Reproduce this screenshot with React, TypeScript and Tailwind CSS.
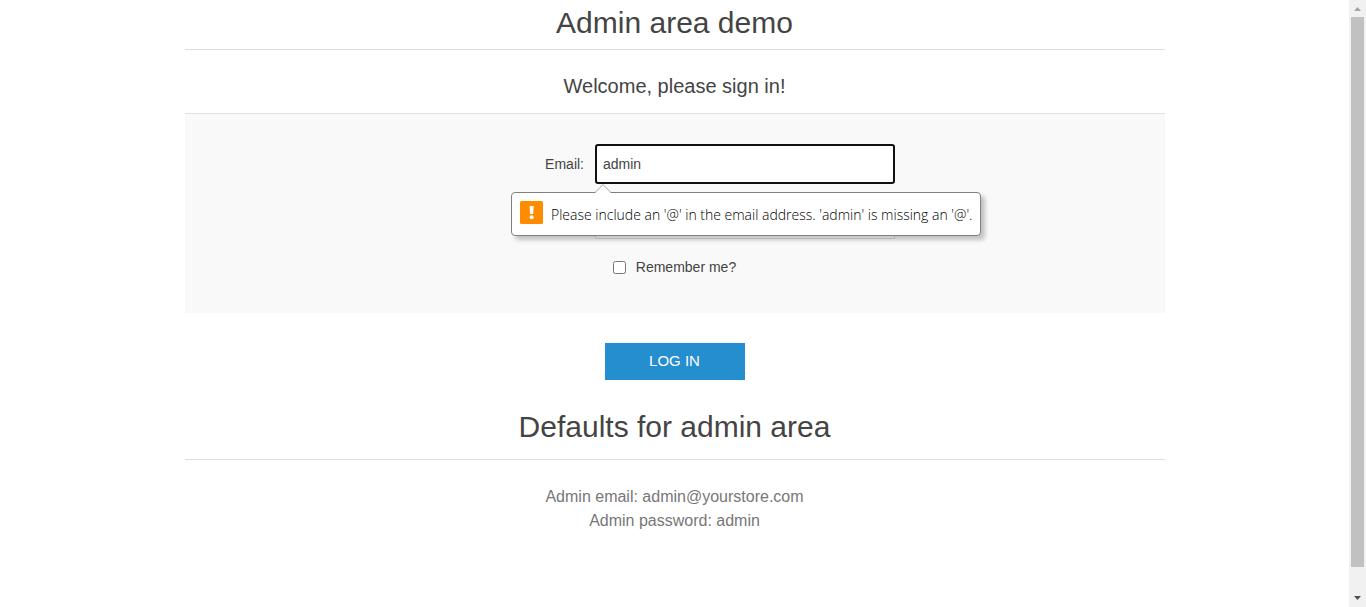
import { useState, type ReactNode } from "react";

function SectionTitle({ children, className }: { children: ReactNode; className: string }) {
  return (
    <h1 className={`border-b border-[#ddd] text-center text-[30px] font-normal text-[#444] ${className}`}>
      {children}
    </h1>
  );
}

function ValidationBubble({ message }: { message: string }) {
  return (
    <div
      role="alert"
      className="absolute -left-[84px] top-[48px] z-10 flex h-[44px] items-center gap-2 whitespace-nowrap rounded-[4px] border border-[#808080] bg-white px-2 shadow-[4px_4px_4px_rgba(0,0,0,0.22)]"
    >
      <svg className="absolute left-[83px] -top-[9px]" width="17" height="10" viewBox="0 0 17 10" aria-hidden="true">
        <path d="M0 9 L8 0.7 L16 9 V10 H0 Z" fill="#fff" />
        <path d="M0 8.5 L8 0.7 L16 8.5" fill="none" stroke="#a6a6a6" strokeWidth="1" />
      </svg>
      <svg className="mb-1 shrink-0" width="23" height="23" viewBox="0 0 23 23" aria-hidden="true">
        <rect width="23" height="23" rx="1.5" fill="#ff8c00" />
        <path d="M9.6 5 H13.6 L13.2 13 H10 Z" fill="#fff" />
        <circle cx="11.6" cy="16.2" r="2" fill="#fff" />
      </svg>
      <span className="font-['Open_Sans',sans-serif] text-[14px] font-light text-black">{message}</span>
    </div>
  );
}

function ScrollTrack() {
  return (
    <div aria-hidden="true" className="flex w-[17px] shrink-0 flex-col items-center bg-[#f1f1f1]">
      <svg className="shrink-0" width="17" height="17" viewBox="0 0 17 17">
        <path d="M5 11 L8.5 7 L12 11 Z" fill="#a3a3a3" />
      </svg>
      <div className="flex w-full grow flex-col px-[2px]">
        <div className="h-[96%] bg-[#c1c1c1]" />
      </div>
      <svg className="shrink-0" width="17" height="17" viewBox="0 0 17 17">
        <path d="M5 6 L8.5 10 L12 6 Z" fill="#505050" />
      </svg>
    </div>
  );
}

export default function App() {
  const [email, setEmail] = useState("admin");
  const [password, setPassword] = useState("");
  const [remember, setRemember] = useState(false);

  return (
    <div className="flex h-screen bg-white font-['Liberation_Sans',Arial,sans-serif] text-[14px] text-[#444]">
      <main className="min-w-0 grow overflow-hidden">
        <div className="mx-auto max-w-[980px]">
          <SectionTitle className="pb-1 leading-[45px]">Admin area demo</SectionTitle>
          <form onSubmit={(e) => e.preventDefault()} noValidate>
            <h2 className="border-b border-[#e0e0e0] pb-3 pt-[21px] text-center text-[20px] leading-[30px]">
              Welcome, please sign in!
            </h2>
            <div className="flex flex-col bg-[#f9f9f9] pb-[34px] pt-[30px]">
              <div className="mb-[15px] flex items-center justify-center gap-[11px]">
                <label htmlFor="email" className="w-[130px] text-right">
                  Email:
                </label>
                <div className="relative w-[300px]">
                  <input
                    id="email"
                    type="email"
                    value={email}
                    onChange={(e) => setEmail(e.target.value)}
                    className="block h-[40px] w-full rounded-[3px] border-2 border-[#101010] bg-white px-[6px] outline-none"
                  />
                  <ValidationBubble message="Please include an '@' in the email address. 'admin' is missing an '@'." />
                </div>
              </div>
              <div className="mb-4 flex items-center justify-center gap-[11px]">
                <span className="w-[130px]" />
                <input
                  type="password"
                  aria-label="Password"
                  value={password}
                  onChange={(e) => setPassword(e.target.value)}
                  className="h-[40px] w-[300px] border border-[#ddd] bg-white px-2 outline-none"
                />
              </div>
              <div className="flex h-6 items-center justify-center gap-[10px]">
                <input
                  id="remember"
                  type="checkbox"
                  checked={remember}
                  onChange={(e) => setRemember(e.target.checked)}
                  className="size-[13px]"
                />
                <label htmlFor="remember">Remember me?</label>
              </div>
            </div>
            <div className="flex justify-center pb-6 pt-[30px]">
              <button type="submit" className="h-[37px] w-[140px] bg-[#248ece] text-[15px] text-white">
                LOG IN
              </button>
            </div>
          </form>
          <SectionTitle className="pb-[10px] leading-[45px]">Defaults for admin area</SectionTitle>
          <p className="pt-[25px] text-center text-[16px] leading-6 text-[#777]">
            Admin email: admin@yourstore.com
            <br />
            Admin password: admin
          </p>
        </div>
      </main>
      <ScrollTrack />
    </div>
  );
}
